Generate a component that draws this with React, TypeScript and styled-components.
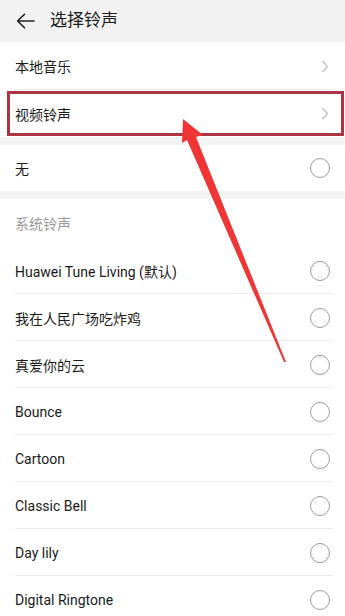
import React from "react";
import styled, { createGlobalStyle } from "styled-components";

const Global = createGlobalStyle`
  html, body { margin: 0; padding: 0; background: #f3f3f3; }
  body { font-family: Roboto, "Noto Sans CJK SC", sans-serif; -webkit-font-smoothing: antialiased; }
`;

const Page = styled.div`
  position: relative;
  width: 345px;
  height: 616px;
  overflow: hidden;
  background: #f3f3f3;
`;

const Header = styled.div`
  height: 42px;
  display: flex;
  align-items: center;
  padding-left: 16px;
  background: #f2f2f2;
`;

const Title = styled.div`
  margin-left: 15px;
  font-size: 17px;
  color: #1c1c1c;
  line-height: 1;
  margin-top: -2px;
`;

const Section = styled.div<{ $gap?: number }>`
  background: #fff;
  margin-bottom: ${(p) => p.$gap ?? 0}px;
`;

const Row = styled.div<{ $h?: number; $divider?: boolean }>`
  position: relative;
  height: ${(p) => p.$h ?? 47}px;
  display: flex;
  align-items: center;
  justify-content: space-between;
  padding: 0 16px 0 15px;
  box-sizing: border-box;
  &::after {
    content: "";
    display: ${(p) => (p.$divider ? "block" : "none")};
    position: absolute;
    left: 15px;
    right: 12px;
    bottom: 0;
    height: 1px;
    background: #ebebeb;
  }
`;

const Label = styled.span`
  font-size: 14px;
  color: #1a1a1a;
`;

const SubHead = styled.span`
  font-size: 14px;
  color: #9a9a9a;
`;

const Radio = styled.span`
  width: 18px;
  height: 18px;
  border: 1px solid #9c9c9c;
  border-radius: 50%;
  margin-right: -1px;
`;

const Highlight = styled.div`
  position: absolute;
  left: 7px;
  right: 1px;
  top: 1px;
  bottom: 1px;
  border: 3px solid #ad3443;
  box-sizing: border-box;
  pointer-events: none;
`;

const ArrowLayer = styled.svg`
  position: absolute;
  left: 0;
  top: 0;
  pointer-events: none;
`;

const Chevron = () => (
  <svg width="8" height="13" viewBox="0 0 8 13" style={{ marginRight: 0 }}>
    <path d="M1.5 1 L6.5 6.5 L1.5 12" fill="none" stroke="#bdbdbd" strokeWidth="1.2" />
  </svg>
);

const BackArrow = () => (
  <svg width="19" height="16" viewBox="0 0 19 16">
    <path d="M18 8 H2 M8.5 1.2 L1.6 8 L8.5 14.8" fill="none" stroke="#222" strokeWidth="1.6" strokeLinecap="round" strokeLinejoin="round" />
  </svg>
);

const tones = [
  "Huawei Tune Living (默认)",
  "我在人民广场吃炸鸡",
  "真爱你的云",
  "Bounce",
  "Cartoon",
  "Classic Bell",
  "Day lily",
  "Digital Ringtone",
];

export default function App() {
  return (
    <Page>
      <Global />
      <Header>
        <BackArrow />
        <Title>选择铃声</Title>
      </Header>
      <Section $gap={8}>
        <Row $h={48} $divider>
          <Label>本地音乐</Label>
          <Chevron />
        </Row>
        <Row $h={47}>
          <Label>视频铃声</Label>
          <Chevron />
          <Highlight />
        </Row>
      </Section>
      <Section $gap={8}>
        <Row $h={46}>
          <Label>无</Label>
          <Radio />
        </Row>
      </Section>
      <Section>
        <Row $h={48}>
          <SubHead>系统铃声</SubHead>
        </Row>
        {tones.map((t, i) => (
          <Row key={t} $h={47} $divider={i < tones.length - 1}>
            <Label>{t}</Label>
            <Radio />
          </Row>
        ))}
      </Section>
      <ArrowLayer width="345" height="616" viewBox="0 0 345 616">
        <polygon points="183,119 203,135 196,137 286,362 284,362 187,140 182,143" fill="#ef3535" />
      </ArrowLayer>
    </Page>
  );
}
